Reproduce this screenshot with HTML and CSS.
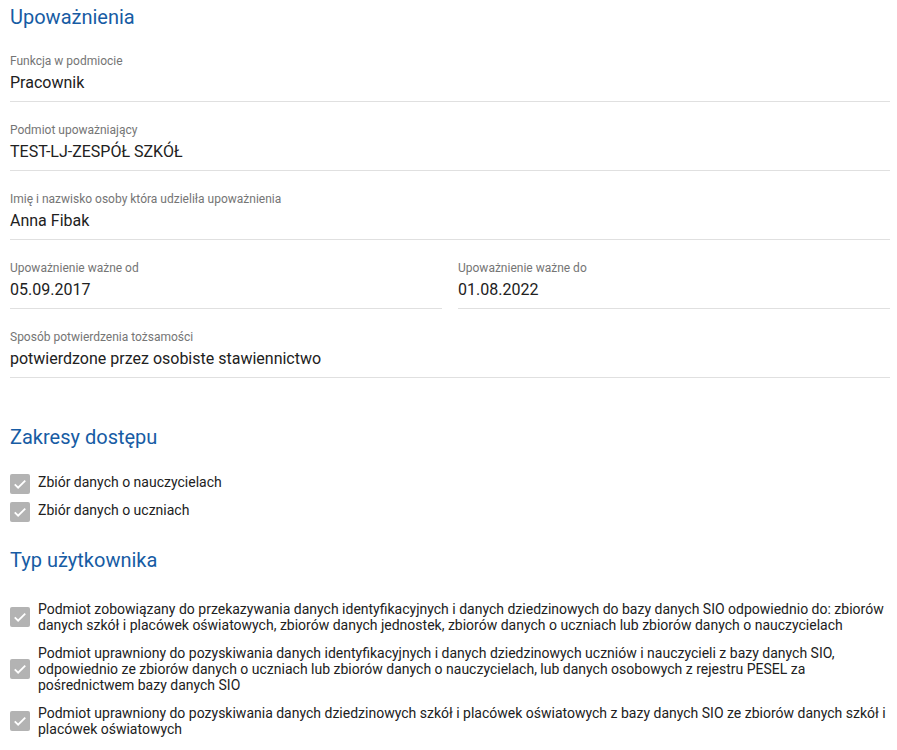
FILE: index.html
```html
<!DOCTYPE html>
<html lang="pl">
<head>
  <meta charset="UTF-8" />
  <meta name="viewport" content="width=device-width, initial-scale=1.0" />
  <title>Upoważnienia</title>
  <link rel="stylesheet" href="styles.css">
</head>
<body>
  <section class="section section-auth">
    <h2 class="section-title">Upoważnienia</h2>
    <div class="fields">
      <div class="field">
        <div class="field-label">Funkcja w podmiocie</div>
        <div class="field-value">Pracownik</div>
      </div>
      <div class="field">
        <div class="field-label">Podmiot upoważniający</div>
        <div class="field-value">TEST-LJ-ZESPÓŁ SZKÓŁ</div>
      </div>
      <div class="field">
        <div class="field-label">Imię i nazwisko osoby która udzieliła upoważnienia</div>
        <div class="field-value">Anna Fibak</div>
      </div>
      <div class="field-row">
        <div class="field">
          <div class="field-label">Upoważnienie ważne od</div>
          <div class="field-value">05.09.2017</div>
        </div>
        <div class="field">
          <div class="field-label">Upoważnienie ważne do</div>
          <div class="field-value">01.08.2022</div>
        </div>
      </div>
      <div class="field">
        <div class="field-label">Sposób potwierdzenia tożsamości</div>
        <div class="field-value">potwierdzone przez osobiste stawiennictwo</div>
      </div>
    </div>
  </section>

  <section class="section section-scope">
    <h2 class="section-title">Zakresy dostępu</h2>
    <ul class="checklist">
      <li class="check-item">
        <span class="checkbox"><svg viewBox="0 0 24 24"><path d="M5 12.5l4.5 4.5L19 7.5" /></svg></span>
        <span class="check-text">Zbiór danych o nauczycielach</span>
      </li>
      <li class="check-item">
        <span class="checkbox"><svg viewBox="0 0 24 24"><path d="M5 12.5l4.5 4.5L19 7.5" /></svg></span>
        <span class="check-text">Zbiór danych o uczniach</span>
      </li>
    </ul>
  </section>

  <section class="section section-type">
    <h2 class="section-title">Typ użytkownika</h2>
    <ul class="checklist checklist-long">
      <li class="check-item">
        <span class="checkbox"><svg viewBox="0 0 24 24"><path d="M5 12.5l4.5 4.5L19 7.5" /></svg></span>
        <span class="check-text">Podmiot zobowiązany do przekazywania danych identyfikacyjnych i danych dziedzinowych do bazy danych SIO odpowiednio do: zbiorów danych szkół i placówek oświatowych, zbiorów danych jednostek, zbiorów danych o uczniach lub zbiorów danych o nauczycielach</span>
      </li>
      <li class="check-item">
        <span class="checkbox"><svg viewBox="0 0 24 24"><path d="M5 12.5l4.5 4.5L19 7.5" /></svg></span>
        <span class="check-text">Podmiot uprawniony do pozyskiwania danych identyfikacyjnych i danych dziedzinowych uczniów i nauczycieli z bazy danych SIO, odpowiednio ze zbiorów danych o uczniach lub zbiorów danych o nauczycielach, lub danych osobowych z rejestru PESEL za pośrednictwem bazy danych SIO</span>
      </li>
      <li class="check-item">
        <span class="checkbox"><svg viewBox="0 0 24 24"><path d="M5 12.5l4.5 4.5L19 7.5" /></svg></span>
        <span class="check-text">Podmiot uprawniony do pozyskiwania danych dziedzinowych szkół i placówek oświatowych z bazy danych SIO ze zbiorów danych szkół i placówek oświatowych</span>
      </li>
    </ul>
  </section>
</body>
</html>
```

FILE: styles.css
```css
* { box-sizing: border-box; }
body {
  font-family: Roboto, "Noto Sans", sans-serif;
  margin: 0;
  padding: 5px 7px 0 10px;
  background: #fff;
  color: #212121;
}
.section-title {
  margin: 0;
  font-size: 20px;
  line-height: 24px;
  font-weight: 400;
  color: #175ca4;
}
.fields {
  margin-top: 4px;
}
.field {
  padding: 20px 0 6px;
  border-bottom: 1px solid #e0e0e0;
}
.field-label {
  font-size: 12px;
  line-height: 16px;
  color: #757575;
}
.field-value {
  margin-top: 2px;
  font-size: 16px;
  line-height: 24px;
  color: #212121;
}
.field-row {
  display: grid;
  grid-template-columns: 1fr 1fr;
  gap: 16px;
}
.section-scope {
  margin-top: 47px;
}
.section-type {
  margin-top: 22px;
}
.checklist {
  list-style: none;
  margin: 21px 0 0;
  padding: 0;
}
.check-item {
  display: flex;
  align-items: center;
  gap: 8px;
  height: 28px;
  font-size: 14px;
}
.check-item .check-text {
  padding-bottom: 4px;
}
.checkbox {
  flex: none;
  width: 20px;
  height: 20px;
  border-radius: 2px;
  background: #b3b3b3;
  display: flex;
  align-items: center;
  justify-content: center;
}
.checkbox svg {
  width: 18px;
  height: 18px;
  fill: none;
  stroke: #fff;
  stroke-width: 2.4;
}
.checklist-long {
  margin-top: 29px;
  display: flex;
  flex-direction: column;
  gap: 12px;
}
.checklist-long .check-item {
  height: auto;
}
.checklist-long .check-text {
  padding-bottom: 0;
  line-height: 16px;
}
```
